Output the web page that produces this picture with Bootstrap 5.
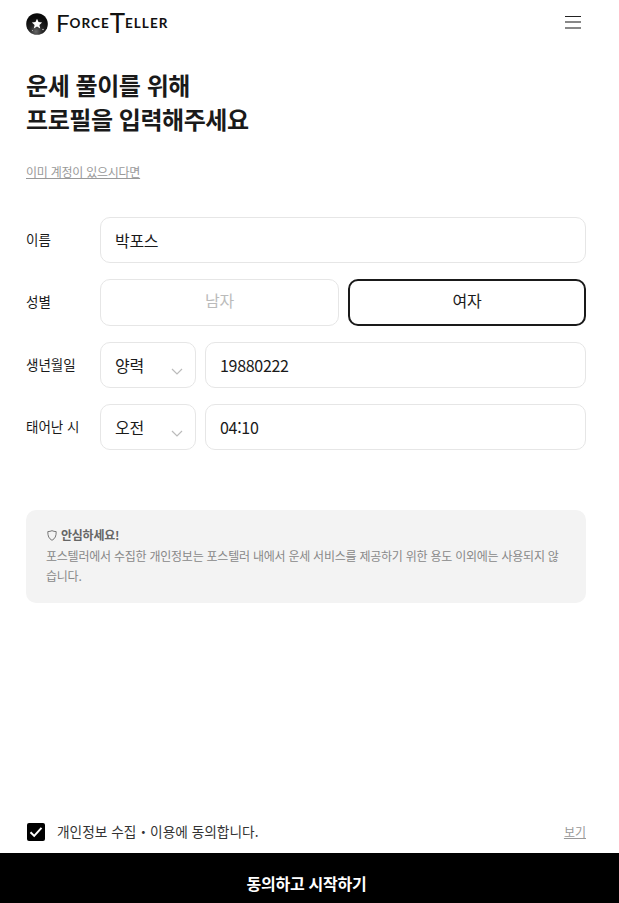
<!DOCTYPE html>
<html lang="ko">
  <head>
    <meta charset="UTF-8" />
    <meta name="viewport" content="width=device-width, initial-scale=1.0" />
    <title>ForceTeller</title>
    <link
      href="https://cdn.jsdelivr.net/npm/bootstrap@5.3.3/dist/css/bootstrap.min.css"
      rel="stylesheet"
    />
    <style>
      body {
        font-family: "Noto Sans CJK KR", "Noto Sans", sans-serif;
        color: #1a1a1a;
        background: #fff;
      }
      .page-wrap {
        min-height: 903px;
      }
      .top-bar {
        height: 46px;
        padding: 0 38px 0 26px;
      }
      .logo-wrap {
        margin-top: 2px;
      }
      .logo-text {
        font-family: Lato, sans-serif;
        font-size: 13.5px;
        line-height: 1;
        font-weight: 700;
        letter-spacing: 1px;
        color: #111;
      }
      .logo-text .big-f {
        font-size: 24px;
        font-weight: 400;
        letter-spacing: 0;
        margin-top: -2px;
      }
      .logo-text .big-t {
        font-size: 26px;
        font-weight: 400;
        letter-spacing: 0;
        margin-top: -2px;
      }
      .ham-wrap {
        margin-bottom: 1px;
      }
      .ham-line {
        display: block;
        width: 16px;
        height: 2px;
        background: #888;
        margin-top: 4px;
      }
      .ham-line:first-child {
        height: 1px;
        background: #222;
        margin-top: 0;
      }
      .main-area {
        padding: 0 33px 0 26px;
      }
      .page-title {
        font-size: 24px;
        line-height: 34px;
        font-weight: 700;
        letter-spacing: -0.45px;
        margin: 22px 0 0;
        color: #1a1a1a;
      }
      .login-link {
        font-size: 12px;
        line-height: 18px;
        letter-spacing: -0.25px;
        color: #999;
        margin-top: 27px;
        display: inline-block;
      }
      .form-area {
        margin-top: 35px;
        gap: 16px;
      }
      .field-row {
        gap: 9px;
      }
      .row-label {
        width: 65px;
        flex: none;
        font-size: 13.5px;
        padding-bottom: 2px;
        color: #1a1a1a;
      }
      .field-box {
        height: 46px;
        border: 1px solid #e6e6e6;
        border-radius: 10px;
        font-size: 16px;
        letter-spacing: -0.3px;
        padding: 0 14px;
        color: #1a1a1a;
        box-shadow: none;
      }
      .sel-box {
        width: 96px;
        flex: none;
        background-image: url("data:image/svg+xml,%3csvg xmlns='http://www.w3.org/2000/svg' viewBox='0 0 12 7'%3e%3cpath fill='none' stroke='%23bbb' stroke-width='1.2' d='M1 1l5 5 5-5'/%3e%3c/svg%3e");
        background-position: right 12px top 25px;
        background-size: 12px 7px;
      }
      .gender-btn {
        flex: 0 0 239px;
        height: 47px;
        border: 1px solid #e6e6e6;
        border-radius: 10px;
        background: #fff;
        font-size: 16px;
        letter-spacing: -0.3px;
        color: #bbb;
        padding: 0 0 5px;
      }
      .gender-btn.picked {
        flex: 1 1 0;
        border: 2px solid #1a1a1a;
        color: #1a1a1a;
      }
      .notice-box {
        margin-top: 60px;
        height: 93px;
        padding: 15px 20px;
        background: #f3f3f3;
        border-radius: 10px;
        font-size: 12px;
        line-height: 20px;
        letter-spacing: -0.24px;
        word-break: break-all;
        color: #888;
      }
      .notice-head {
        margin-bottom: 1px;
      }
      .notice-head svg {
        margin-left: 1px;
      }
      .notice-head strong {
        color: #666;
      }
      .agree-row {
        padding: 0 33px 0 27px;
        margin-bottom: 11px;
        font-size: 13.7px;
        color: #333;
      }
      .agree-check {
        width: 18px;
        height: 18px;
        flex: none;
        border-radius: 2px;
        background: #000;
      }
      .see-link {
        font-size: 12px;
        color: #999;
      }
      .start-btn {
        height: 50px;
        background: #000;
        color: #fff;
        font-size: 16px;
        font-weight: 700;
        letter-spacing: -0.25px;
        border: 0;
        border-radius: 0;
        padding: 9px 6px 0 0;
      }
    </style>
  </head>
  <body>
    <div class="page-wrap d-flex flex-column">
      <div class="top-bar d-flex align-items-center justify-content-between">
        <div class="logo-wrap d-flex align-items-center">
          <svg width="22" height="22" viewBox="0 0 22 22" class="me-2">
            <defs>
              <radialGradient id="ball" cx="45%" cy="85%" r="65%">
                <stop offset="0" stop-color="#666" />
                <stop offset="0.5" stop-color="#222" />
                <stop offset="1" stop-color="#0a0a0a" />
              </radialGradient>
            </defs>
            <circle cx="11" cy="11" r="10.8" fill="url(#ball)" />
            <path
              fill="#fff"
              d="M11 5.800l1.500 3.300 3.600.4-2.700 2.400.8 3.600-3.200-1.900-3.200 1.900.8-3.600-2.700-2.400 3.600-.4z"
            />
            <circle cx="17" cy="16.500" r=".7" fill="#ddd" />
            <circle cx="6.500" cy="17.500" r=".5" fill="#ccc" />
          </svg>
          <div class="logo-text d-flex align-items-center">
            <span class="big-f">F</span><span>ORCE</span><span class="big-t">T</span><span>ELLER</span>
          </div>
        </div>
        <div class="ham-wrap">
          <span class="ham-line"></span>
          <span class="ham-line"></span>
          <span class="ham-line"></span>
        </div>
      </div>

      <div class="main-area">
        <h1 class="page-title">운세 풀이를 위해<br />프로필을 입력해주세요</h1>
        <a href="#" class="login-link">이미 계정이 있으시다면</a>

        <div class="form-area d-flex flex-column">
          <div class="field-row d-flex align-items-center">
            <label class="row-label">이름</label>
            <input type="text" class="form-control field-box" value="박포스" />
          </div>
          <div class="field-row d-flex align-items-center">
            <label class="row-label">성별</label>
            <div class="field-row d-flex flex-grow-1">
              <button type="button" class="btn gender-btn">남자</button>
              <button type="button" class="btn gender-btn picked">여자</button>
            </div>
          </div>
          <div class="field-row d-flex align-items-center">
            <label class="row-label">생년월일</label>
            <select class="form-select field-box sel-box">
              <option>양력</option>
            </select>
            <input type="text" class="form-control field-box" value="19880222" />
          </div>
          <div class="field-row d-flex align-items-center">
            <label class="row-label">태어난 시</label>
            <select class="form-select field-box sel-box">
              <option>오전</option>
            </select>
            <input type="text" class="form-control field-box" value="04:10" />
          </div>
        </div>

        <div class="notice-box">
          <div class="notice-head d-flex align-items-center">
            <svg width="10" height="11" viewBox="0 0 10 11" class="me-1">
              <path fill="none" stroke="#777" d="M.8 1.600C2.500 1.600 3.600 1.200 5 .7c1.400.5 2.500.9 4.200.9 0 4.500-1 7-4.200 8.700C1.800 8.600.8 6.100.8 1.600z" />
            </svg>
            <strong>안심하세요!</strong>
          </div>
          포스텔러에서 수집한 개인정보는 포스텔러 내에서 운세 서비스를 제공하기 위한 용도 이외에는 사용되지 않습니다.
        </div>
      </div>

      <div class="mt-auto">
        <div class="agree-row d-flex align-items-center">
          <span class="agree-check d-flex align-items-center justify-content-center me-2">
            <svg width="14" height="12" viewBox="0 0 14 12">
              <path fill="none" stroke="#fff" stroke-width="2" d="M1.500 6.200l3.700 3.700 7.300-8" />
            </svg>
          </span>
          <span class="ms-1 flex-grow-1">개인정보 수집・이용에 동의합니다.</span>
          <a href="#" class="see-link">보기</a>
        </div>
        <button type="button" class="btn start-btn w-100">동의하고 시작하기</button>
      </div>
    </div>
    <script src="https://cdn.jsdelivr.net/npm/bootstrap@5.3.3/dist/js/bootstrap.bundle.min.js"></script>
  </body>
</html>
